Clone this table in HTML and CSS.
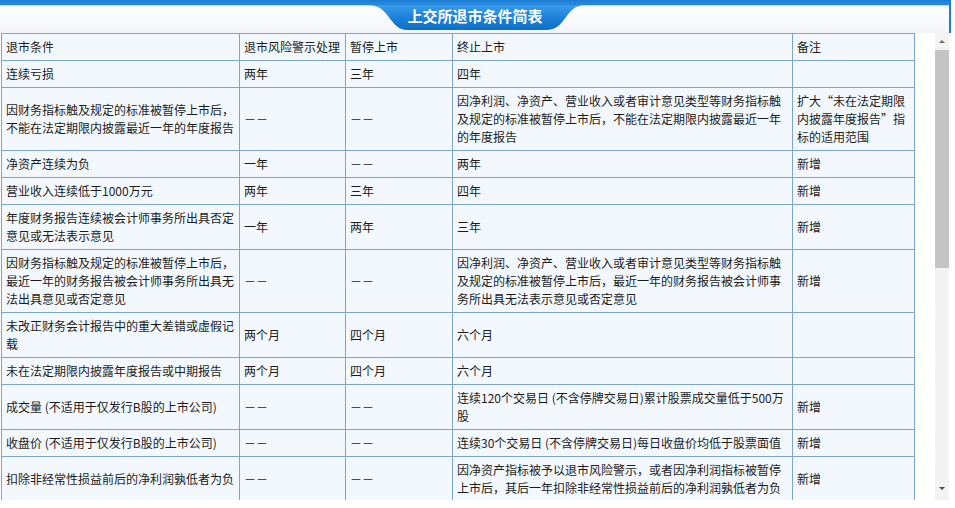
FILE: index.html
```html
<!DOCTYPE html>
<html lang="zh-CN">
<head>
<meta charset="utf-8">
<title>上交所退市条件简表</title>
<link rel="stylesheet" href="styles.css">
</head>
<body>
<div class="frame">
  <header class="topbar">
    <div class="tab">上交所退市条件简表</div>
  </header>
  <div class="main">
    <div class="viewport">
      <table class="grid">
        <colgroup>
          <col class="c1"><col class="c2"><col class="c3"><col class="c4"><col class="c5">
        </colgroup>
        <tbody>
          <tr><td>退市条件</td><td>退市风险警示处理</td><td>暂停上市</td><td>终止上市</td><td>备注</td></tr>
          <tr><td>连续亏损</td><td>两年</td><td>三年</td><td>四年</td><td></td></tr>
          <tr>
            <td>因财务指标触及规定的标准被暂停上市后，<br>不能在法定期限内披露最近一年的年度报告</td>
            <td>－－</td><td>－－</td>
            <td>因净利润、净资产、营业收入或者审计意见类型等财务指标触<br>及规定的标准被暂停上市后，不能在法定期限内披露最近一年<br>的年度报告</td>
            <td>扩大“未在法定期限<br>内披露年度报告”指<br>标的适用范围</td>
          </tr>
          <tr><td>净资产连续为负</td><td>一年</td><td>－－</td><td>两年</td><td>新增</td></tr>
          <tr><td>营业收入连续低于1000万元</td><td>两年</td><td>三年</td><td>四年</td><td>新增</td></tr>
          <tr><td>年度财务报告连续被会计师事务所出具否定<br>意见或无法表示意见</td><td>一年</td><td>两年</td><td>三年</td><td>新增</td></tr>
          <tr>
            <td>因财务指标触及规定的标准被暂停上市后，<br>最近一年的财务报告被会计师事务所出具无<br>法出具意见或否定意见</td>
            <td>－－</td><td>－－</td>
            <td>因净利润、净资产、营业收入或者审计意见类型等财务指标触<br>及规定的标准被暂停上市后，最近一年的财务报告被会计师事<br>务所出具无法表示意见或否定意见</td>
            <td>新增</td>
          </tr>
          <tr><td>未改正财务会计报告中的重大差错或虚假记<br>载</td><td>两个月</td><td>四个月</td><td>六个月</td><td></td></tr>
          <tr><td>未在法定期限内披露年度报告或中期报告</td><td>两个月</td><td>四个月</td><td>六个月</td><td></td></tr>
          <tr><td>成交量 (不适用于仅发行B股的上市公司)</td><td>－－</td><td>－－</td><td>连续120个交易日 (不含停牌交易日)累计股票成交量低于500万<br>股</td><td>新增</td></tr>
          <tr><td>收盘价 (不适用于仅发行B股的上市公司)</td><td>－－</td><td>－－</td><td>连续30个交易日 (不含停牌交易日)每日收盘价均低于股票面值</td><td>新增</td></tr>
          <tr><td>扣除非经常性损益前后的净利润孰低者为负</td><td>－－</td><td>－－</td><td>因净资产指标被予以退市风险警示，或者因净利润指标被暂停<br>上市后，其后一年扣除非经常性损益前后的净利润孰低者为负</td><td>新增</td></tr>
        </tbody>
      </table>
    </div>
    <div class="scrollbar">
      <div class="arrow up"></div>
      <div class="track"><div class="thumb"></div></div>
      <div class="arrow down"></div>
    </div>
  </div>
</div>
</body>
</html>
```
FILE: styles.css
```css
html, body {
  margin: 0;
  padding: 0;
  background: #ffffff;
}

body {
  font-family: "Noto Sans CJK SC", "Noto Sans", sans-serif;
}

.frame {
  width: 951px;
}

.topbar {
  box-sizing: border-box;
  height: 33px;
  padding-top: 5px;
  padding-left: 368px;
  border-right: 2px solid #1b7fd6;
  background: linear-gradient(to bottom, #1a7cd3 0, #2a8ade 4px, #1b7fd6 5px, #a9d3f3 5px, #e9f3fb 6px, #ffffff 8px, #f2f5f9 100%);
  display: flex;
}

.tab {
  width: 218px;
  height: 25px;
  padding-right: 4px;
  box-sizing: border-box;
  background: linear-gradient(to bottom, #3b9ce9 0, #1f84dc 45%, #0d6ec7 100%);
  clip-path: path('M0 0 C11 0 15 5 20 11 C26 19 30 25 40 25 L178 25 C188 25 192 20 198 12 C203 5 207 0 218 0 Z');
  color: #ffffff;
  font-weight: bold;
  font-size: 15px;
  line-height: 22px;
  text-align: center;
  letter-spacing: 0;
}

.main {
  display: flex;
  height: 467px;
}

.viewport {
  box-sizing: border-box;
  width: 935px;
  height: 467px;
  padding-left: 1px;
  overflow: hidden;
}

.grid {
  border-collapse: collapse;
  table-layout: fixed;
  width: 913px;
  font-size: 12px;
  line-height: 18px;
  color: #1c1c1c;
  background: #f2f8fd;
}

.c1 { width: 238px; }
.c2 { width: 106px; }
.c3 { width: 107px; }
.c4 { width: 340px; }
.c5 { width: 122px; }

.grid td {
  border: 1px solid #7ea6c8;
  padding: 4px 4px 4px 4px;
  vertical-align: middle;
  white-space: nowrap;
  overflow: hidden;
}

.scrollbar {
  width: 14px;
  height: 467px;
  display: flex;
  flex-direction: column;
  background: #f3f3f3;
}

.arrow {
  height: 16px;
  display: flex;
  align-items: center;
  justify-content: center;
  flex: none;
}

.arrow::before {
  content: "";
  width: 0;
  height: 0;
  border-left: 3px solid transparent;
  border-right: 3px solid transparent;
}

.arrow.up::before {
  border-bottom: 3px solid #6a6a6a;
}

.arrow.down {
  margin-bottom: 4px;
}

.arrow.down::before {
  border-top: 3px solid #4a4a4a;
}

.track {
  flex: 1;
  padding-top: 1px;
}

.thumb {
  height: 218px;
  background: #c4c4c4;
}
```
